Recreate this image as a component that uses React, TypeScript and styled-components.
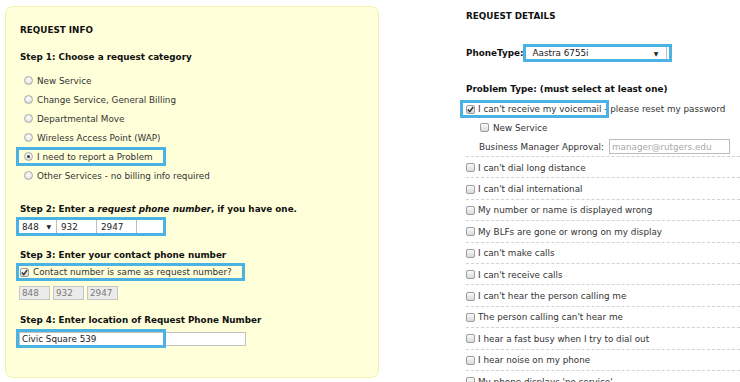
import React from 'react';
import styled, {createGlobalStyle} from 'styled-components';

const GlobalStyle = createGlobalStyle`
  html, body {
    margin: 0;
    overflow: hidden;
    background: #fff;
  }
  body {
    font-family: "DejaVu Sans", Verdana, sans-serif;
    font-size: 8.8px;
    color: #222;
  }
`

const categories = [
    'New Service',
    'Change Service, General Billing',
    'Departmental Move',
    'Wireless Access Point (WAP)',
    'I need to report a Problem',
    'Other Services - no billing info required',
]
const picked = 'I need to report a Problem'

const problems = [
    "I can't dial long distance",
    "I can't dial international",
    'My number or name is displayed wrong',
    'My BLFs are gone or wrong on my display',
    "I can't make calls",
    "I can't receive calls",
    "I can't hear the person calling me",
    "The person calling can't hear me",
    'I hear a fast busy when I try to dial out',
    'I hear noise on my phone',
    "My phone displays 'no service'",
]

const Check = () => (
    <svg width="7" height="7" viewBox="0 0 7 7">
        <path d="M0.8 3.6 L2.7 5.6 L6.2 1" fill="none" stroke="#333" strokeWidth="1.5"/>
    </svg>
)

const Radio = ({on}: { on?: boolean }) => <RadioDot $on={on}/>
const Checkbox = ({on}: { on?: boolean }) => <Box>{on && <Check/>}</Box>

const App = () => {
    return (
        <>
            <GlobalStyle/>
            <Page>
                <InfoPanel>
                    <Title>REQUEST INFO</Title>
                    <Step $top={8} $bottom={4}>Step 1: Choose a request category</Step>
                    <RadioList>
                        {categories.map(c => c === picked ? (
                            <Ring key={c} $w={150} $h={19}>
                                <RadioRow $pad={5}><Radio on/>{c}</RadioRow>
                            </Ring>
                        ) : (
                            <RadioRow key={c} $pad={4}><Radio/>{c}</RadioRow>
                        ))}
                    </RadioList>
                    <Step $top={15} $bottom={-2}>Step 2: Enter a <i>request phone number</i>, if you have one.</Step>
                    <Ring $w={150} $h={19} $fill="#fff">
                        <PhoneRow>
                            <AreaSelect>848<Arrow>▼</Arrow></AreaSelect>
                            <PhoneBox>932</PhoneBox>
                            <PhoneBox>2947</PhoneBox>
                        </PhoneRow>
                    </Ring>
                    <Step $top={10} $bottom={-2}>Step 3: Enter your contact phone number</Step>
                    <Ring $w={229} $h={18}>
                        <CheckRow $pad={1} $gap={4}><Checkbox on/>Contact number is same as request number?</CheckRow>
                    </Ring>
                    <GrayRow>
                        <GrayBox>848</GrayBox>
                        <GrayBox>932</GrayBox>
                        <GrayBox>2947</GrayBox>
                    </GrayRow>
                    <Step $top={11} $bottom={-1}>Step 4: Enter location of Request Phone Number</Step>
                    <LocationWrap>
                        <LocationInput>Civic Square 539</LocationInput>
                        <Overlay $left={-4} $w={150} $h={19}/>
                    </LocationWrap>
                </InfoPanel>

                <Details>
                    <Title>REQUEST DETAILS</Title>
                    <PhoneTypeRow>
                        <b>PhoneType:</b>
                        <Ring $w={149} $h={18} $fill="#fff" $shift={0}>
                            <PhoneSelect>Aastra 6755i<Arrow>▼</Arrow></PhoneSelect>
                        </Ring>
                    </PhoneTypeRow>
                    <Step $top={18} $bottom={0}>Problem Type: (must select at least one)</Step>
                    <VoicemailRow>
                        <Checkbox on/>I can't receive my voicemail - please reset my password
                        <Overlay $left={-6} $w={149} $h={18}/>
                    </VoicemailRow>
                    <CheckRow $pad={14} $gap={4} $h={19}><Checkbox/>New Service</CheckRow>
                    <ApprovalRow>
                        Business Manager Approval:
                        <EmailBox>manager@rutgers.edu</EmailBox>
                    </ApprovalRow>
                    <ProblemList>
                        {problems.map(p => (
                            <ProblemRow key={p}><Checkbox/>{p}</ProblemRow>
                        ))}
                    </ProblemList>
                </Details>
            </Page>
        </>
    );
};

const Page = styled.div`
  display: flex;
  align-items: flex-start;
  padding: 6px 0 0 5px;
`
const InfoPanel = styled.div`
  box-sizing: border-box;
  width: 374px;
  height: 372px;
  flex: none;
  padding: 14px 14px;
  background: #ffffda;
  border: 1px solid #f7eeb4;
  border-radius: 8px;
`
const Title = styled.div`
  font-weight: bold;
  line-height: 19px;
  color: #111;
`
const Step = styled.div<{ $top: number, $bottom: number }>`
  margin-top: ${({$top}) => $top}px;
  margin-bottom: ${({$bottom}) => $bottom}px;
  font-weight: bold;
  line-height: 19px;
  color: #111;
`
const RadioList = styled.div`
  display: flex;
  flex-direction: column;
`
const RadioRow = styled.div<{ $pad: number }>`
  display: flex;
  align-items: center;
  gap: 4px;
  height: 19px;
  box-sizing: border-box;
  padding-left: ${({$pad}) => $pad}px;
  color: #333;
`
const Ring = styled.div<{ $w: number, $h: number, $fill?: string, $shift?: number }>`
  box-sizing: border-box;
  width: ${({$w}) => $w}px;
  height: ${({$h}) => $h}px;
  margin-left: ${({$shift}) => $shift ?? -4}px;
  border: 3px solid #4ab3e3;
  background: ${({$fill}) => $fill || 'transparent'};
  display: flex;
  align-items: stretch;
  flex: none;
  & > * {
    height: auto;
    flex: 1;
  }
`
const Overlay = styled.div<{ $left: number, $w: number, $h: number }>`
  position: absolute;
  top: 0;
  left: ${({$left}) => $left}px;
  width: ${({$w}) => $w}px;
  height: ${({$h}) => $h}px;
  box-sizing: border-box;
  border: 3px solid #4ab3e3;
  pointer-events: none;
`
const RadioDot = styled.span<{ $on?: boolean }>`
  position: relative;
  flex: none;
  box-sizing: border-box;
  width: 9px;
  height: 9px;
  border-radius: 50%;
  border: 1px solid #a9a9a9;
  background: radial-gradient(circle at 50% 35%, #ffffff 0%, #e9e9e9 55%, #cdcdcd 100%);
  &::after {
    content: '';
    display: ${({$on}) => $on ? 'block' : 'none'};
    position: absolute;
    left: 2px;
    top: 2px;
    width: 3px;
    height: 3px;
    border-radius: 50%;
    background: #3a3a3a;
  }
`
const Box = styled.span`
  flex: none;
  box-sizing: border-box;
  width: 9px;
  height: 9px;
  border: 1px solid #9c9c9c;
  border-radius: 2px;
  background: linear-gradient(#fbfbfb, #d9d9d9);
  display: flex;
  align-items: center;
  justify-content: center;
`
const CheckRow = styled.div<{ $pad: number, $gap: number, $h?: number }>`
  display: flex;
  align-items: center;
  gap: ${({$gap}) => $gap}px;
  padding-left: ${({$pad}) => $pad}px;
  height: ${({$h}) => $h ? `${$h}px` : 'auto'};
  color: #333;
`
const PhoneRow = styled.div`
  display: flex;
  align-items: stretch;
`
const AreaSelect = styled.div`
  width: 38px;
  box-sizing: border-box;
  display: flex;
  align-items: center;
  justify-content: space-between;
  padding: 0 5px 0 3px;
  border-right: 1px solid #bdbdbd;
  color: #222;
`
const Arrow = styled.span`
  font-size: 6px;
  color: #222;
`
const PhoneBox = styled.div`
  width: 38px;
  box-sizing: border-box;
  margin-left: 2px;
  padding-left: 2px;
  display: flex;
  align-items: center;
  border-right: 1px solid #bdbdbd;
  color: #222;
`
const GrayRow = styled.div`
  display: flex;
  gap: 3px;
  margin: 5px 0 0 -1px;
`
const GrayBox = styled.div`
  box-sizing: border-box;
  width: 31px;
  height: 14px;
  padding-left: 2px;
  display: flex;
  align-items: center;
  background: #ebebeb;
  border: 1px solid #c6c6c6;
  color: #7a7a7a;
`
const LocationWrap = styled.div`
  position: relative;
  height: 19px;
`
const LocationInput = styled.div`
  position: relative;
  top: 3px;
  box-sizing: border-box;
  width: 227px;
  height: 14px;
  margin-left: -1px;
  padding-left: 2px;
  display: flex;
  align-items: center;
  background: #fff;
  border: 1px solid #c3c3c3;
  color: #222;
`
const Details = styled.div`
  flex: 1;
  margin-left: 87px;
  padding-top: 1px;
`
const PhoneTypeRow = styled.div`
  display: flex;
  align-items: center;
  margin-top: 18px;
  color: #111;
`
const PhoneSelect = styled.div`
  display: flex;
  align-items: center;
  justify-content: space-between;
  padding: 0 8px 0 6px;
  margin-right: 2px;
  border-right: 1px solid #bdbdbd;
  color: #222;
`
const VoicemailRow = styled.div`
  position: relative;
  display: flex;
  align-items: center;
  gap: 3px;
  height: 18px;
  margin-top: 1px;
  color: #333;
`
const ApprovalRow = styled.div`
  display: flex;
  align-items: center;
  gap: 5px;
  height: 19px;
  padding-left: 13px;
  color: #333;
`
const EmailBox = styled.div`
  box-sizing: border-box;
  width: 121px;
  height: 15px;
  padding-left: 2px;
  display: flex;
  align-items: center;
  border: 1px solid #bcbcbc;
  background: #fff;
  color: #a9a9a9;
`
const ProblemList = styled.div`
  display: flex;
  flex-direction: column;
`
const ProblemRow = styled.div`
  box-sizing: border-box;
  height: 21.4px;
  padding-top: 1px;
  display: flex;
  align-items: center;
  gap: 3px;
  border-top: 1px dashed #d2d2d2;
  color: #333;
`

export default App;
